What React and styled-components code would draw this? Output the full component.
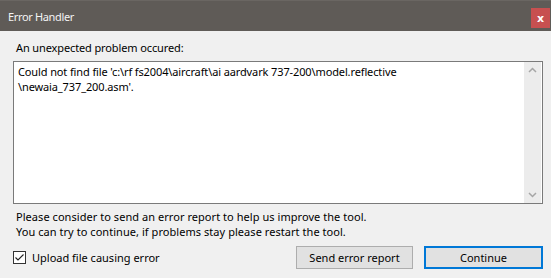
import React from "react";
import styled, { createGlobalStyle } from "styled-components";

const Global = createGlobalStyle`
  html, body { margin: 0; padding: 0; background: #f0f0f0; }
  body { font-family: "Noto Sans", "Open Sans", sans-serif; font-size: 11px; color: #000; }
`;

const Window = styled.div`
  width: 551px;
  height: 278px;
  display: flex;
  flex-direction: column;
  background: #f0f0f0;
  overflow: hidden;
`;

const TitleBar = styled.div`
  height: 31px;
  flex: none;
  background: #5f5b57;
  border-top: 1px solid #6a6662;
  box-sizing: border-box;
  display: flex;
  align-items: center;
  justify-content: space-between;
  padding: 0 1px 0 8px;
`;

const Title = styled.span`
  color: #f4f4f4;
  font-size: 11px;
  letter-spacing: -0.35px;
`;

const CloseButton = styled.div`
  width: 19px;
  height: 20px;
  margin-top: 4px;
  background: #c75050;
  color: #fff;
  font-size: 11px;
  font-weight: bold;
  display: flex;
  align-items: center;
  justify-content: center;
  font-family: "DejaVu Sans", sans-serif;
  line-height: 1;
`;

const Body = styled.div`
  flex: 1;
  display: flex;
  flex-direction: column;
  padding: 9px 8px 0 13px;
`;

const Line = styled.div`
  height: 15px;
  line-height: 15px;
  white-space: nowrap;
  letter-spacing: ${(p) => p.$ls || 0}px;
`;

const Label = styled.div`
  padding-left: 3px;
`;

const TextBox = styled.div`
  margin-top: 6px;
  height: 143px;
  box-sizing: border-box;
  border: 1px solid #7a7a7a;
  background: #fff;
  display: flex;
`;

const Message = styled.div`
  flex: 1;
  padding: 2px 4px;
`;

const ScrollBar = styled.div`
  width: 17px;
  margin: 0 1px 0 0;
  background: #ececec;
  display: flex;
  flex-direction: column;
  justify-content: space-between;
  align-items: center;
  padding: 5px 0;
  box-sizing: border-box;
`;

const Notes = styled.div`
  margin-top: 5px;
  padding-left: 3px;
`;

const Footer = styled.div`
  margin-top: 7px;
  display: flex;
  align-items: center;
`;

const CheckLabel = styled.label`
  display: flex;
  align-items: center;
  gap: 6px;
  flex: 1;
`;

const CheckBox = styled.span`
  width: 13px;
  height: 13px;
  box-sizing: border-box;
  border: 1px solid #333;
  background: #fff;
  display: flex;
  align-items: center;
  justify-content: center;
`;

const Button = styled.div`
  width: ${(p) => p.$w}px;
  height: 23px;
  box-sizing: border-box;
  background: #e1e1e1;
  border: ${(p) => (p.$default ? "2px solid #0078d7" : "1px solid #adadad")};
  display: flex;
  align-items: center;
  justify-content: center;
  margin-left: ${(p) => p.$ml}px;
`;

const Chevron = ({ up }) => (
  <svg width="9" height="6" viewBox="0 0 9 6">
    <path
      d={up ? "M1 5 L4.5 1.5 L8 5" : "M1 1 L4.5 4.5 L8 1"}
      fill="none"
      stroke="#a6a6a6"
      strokeWidth="1.5"
    />
  </svg>
);

export default function App() {
  return (
    <>
      <Global />
      <Window>
        <TitleBar>
          <Title>Error Handler</Title>
          <CloseButton>x</CloseButton>
        </TitleBar>
        <Body>
          <Label>
            <Line $ls={-0.12}>An unexpected problem occured:</Line>
          </Label>
          <TextBox>
            <Message>
              <Line $ls={-0.12}>
                Could not find file 'c:\rf fs2004\aircraft\ai aardvark 737-200\model.reflective
              </Line>
              <Line $ls={-0.12}>\newaia_737_200.asm'.</Line>
            </Message>
            <ScrollBar>
              <Chevron up />
              <Chevron />
            </ScrollBar>
          </TextBox>
          <Notes>
            <Line $ls={0.05}>Please consider to send an error report to help us improve the tool.</Line>
            <Line $ls={0.05}>You can try to continue, if problems stay please restart the tool.</Line>
          </Notes>
          <Footer>
            <CheckLabel>
              <CheckBox>
                <svg width="11" height="11" viewBox="0 0 11 11">
                  <path d="M1.5 5.5 L4 8 L9.5 2.5" fill="none" stroke="#222" strokeWidth="1.1" />
                </svg>
              </CheckBox>
              <Line>Upload file causing error</Line>
            </CheckLabel>
            <Button $w={117} $ml={0}>
              <Line>Send error report</Line>
            </Button>
            <Button $w={119} $ml={11} $default>
              <Line>Continue</Line>
            </Button>
          </Footer>
        </Body>
      </Window>
    </>
  );
}
